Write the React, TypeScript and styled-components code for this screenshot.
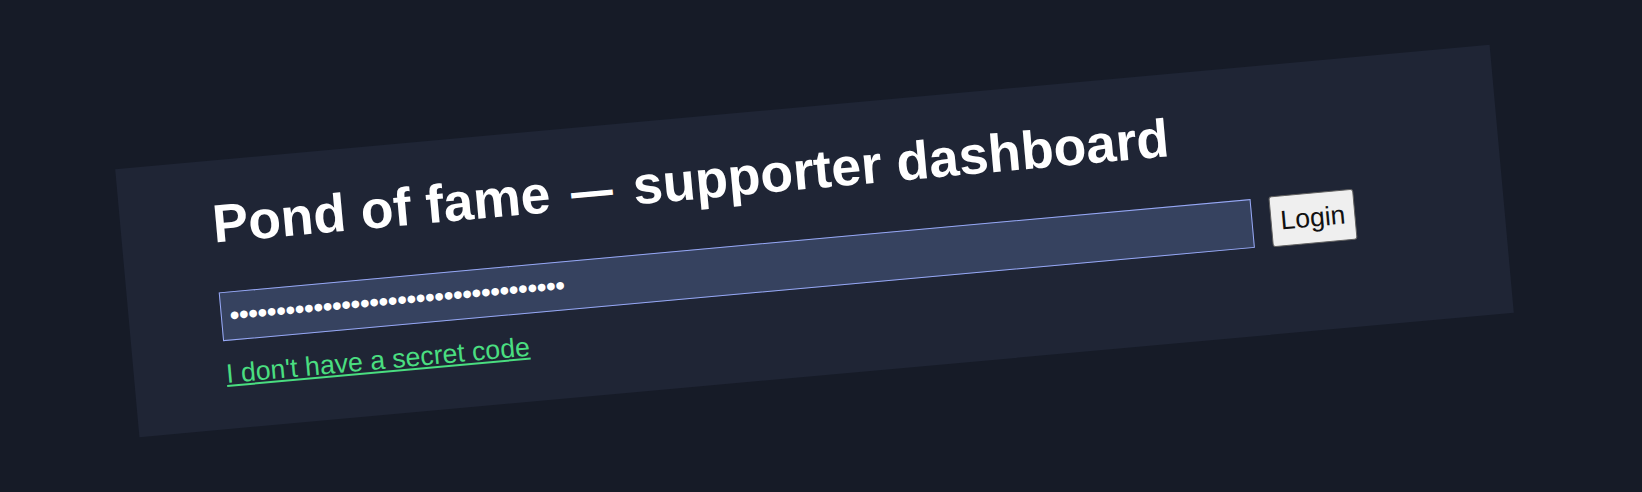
import React from "react";
import styled, { createGlobalStyle } from "styled-components";

const GlobalStyle = createGlobalStyle`
  html, body {
    margin: 0;
    padding: 0;
    background: #161b27;
  }
  body {
    font-family: "Liberation Sans", Arial, Helvetica, sans-serif;
  }
`;

const Page = styled.main`
  width: 100vw;
  height: 100vh;
  display: flex;
  align-items: center;
  justify-content: center;
  overflow: hidden;
  background: #161b27;
`;

const Card = styled.section`
  box-sizing: border-box;
  width: 1380px;
  padding: 33px 149px 39px 92px;
  background: #1f2535;
  transform: translate(-6.5px, -5.5px) rotate(-5.17deg);
  flex-shrink: 0;
`;

const Title = styled.h1`
  margin: 0 0 37px;
  font-size: 53.5px;
  line-height: 61px;
  font-weight: 700;
  color: #ffffff;
  white-space: nowrap;
`;

/* The heading's dash is drawn a little narrower than the font's em dash,
   keeping the same advance so the words around it stay in place. */
const Dash = styled.span`
  display: inline-block;
  transform: scaleX(0.78);
`;

const LoginRow = styled.form`
  display: flex;
  align-items: center;
  gap: 18px;
  height: 51px;
  margin: 0;
`;

const CodeInput = styled.input`
  box-sizing: border-box;
  width: 1037px;
  height: 49px;
  padding: 0 8px;
  border: 1px solid #97a8f6;
  border-radius: 0;
  background: #36425f;
  color: #ffffff;
  font-family: "Liberation Sans", Arial, sans-serif;
  font-size: 26.7px;
  font-weight: 700;
  outline: none;
`;

const LoginButton = styled.button`
  box-sizing: border-box;
  height: 51px;
  padding: 0 9px;
  border: 1px solid #5f5f5f;
  border-radius: 3px;
  background: #efefef;
  color: #111111;
  font-family: "Liberation Sans", Arial, sans-serif;
  font-size: 26.6px;
  cursor: pointer;
`;

const NoCodeLink = styled.a`
  display: block;
  width: fit-content;
  margin-top: 17px;
  color: #4ade80;
  font-size: 26.7px;
  line-height: 31px;
  text-decoration: underline;
`;

export default function App() {
  return (
    <>
      <GlobalStyle />
      <Page>
        <Card>
          <Title>
            Pond of fame <Dash>—</Dash> supporter dashboard
          </Title>
          <LoginRow onSubmit={(e) => e.preventDefault()}>
            <CodeInput
              type="password"
              defaultValue="abcdefghijklmnopqrstuvwxyz0123456789"
              aria-label="Secret code"
            />
            <LoginButton type="submit">Login</LoginButton>
          </LoginRow>
          <NoCodeLink href="#">I don't have a secret code</NoCodeLink>
        </Card>
      </Page>
    </>
  );
}
